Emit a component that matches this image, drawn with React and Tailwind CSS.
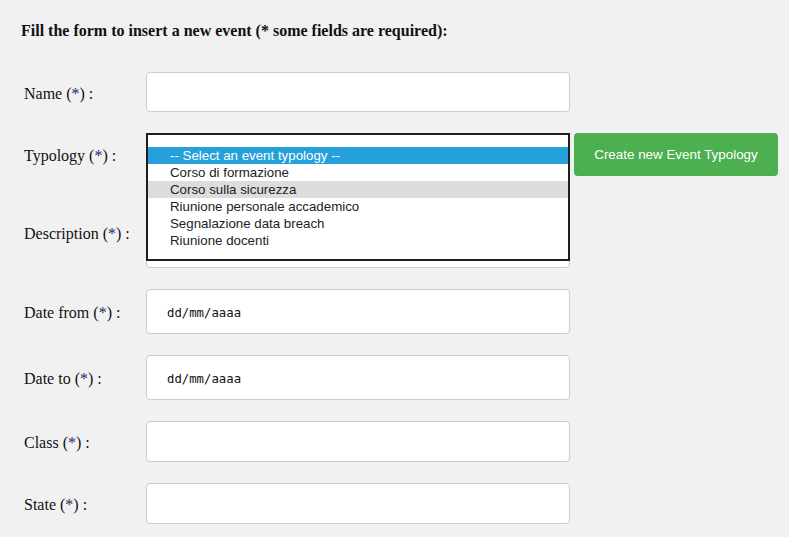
import React from "react";

const typologies = [
  "Corso di formazione",
  "Corso sulla sicurezza",
  "Riunione personale accademico",
  "Segnalazione data breach",
  "Riunione docenti",
];

function Label({ text }) {
  return (
    <label className="w-[122px] shrink-0 pt-[3px] text-[16px] text-[#111]">
      {text} (<span className="text-[#142f6b]">*</span>) :
    </label>
  );
}

function Field({ label, h = "h-[41px]", children }) {
  return (
    <div className="flex items-center">
      <Label text={label} />
      <div className={`w-[424px] ${h} bg-white border border-[#cccccc] rounded-[4px] flex items-center pl-[20px]`}>
        {children}
      </div>
    </div>
  );
}

export default function App() {
  return (
    <div className="min-h-[537px] bg-[#f1f1f1] font-['Liberation_Serif',serif] pt-[19px]">
      <h2 className="pl-[21px] text-[16px] leading-[24px] font-bold text-[#111]">
        Fill the form to insert a new event (* some fields are required):
      </h2>

      <form className="pl-[24px] mt-[29px] flex flex-col gap-[21px]">
        <Field label="Name" h="h-[40px]" />

        <div className="flex items-center">
          <Label text="Typology" />
          <div className="relative w-[424px] h-[43px]">
            <div className="absolute left-0 top-0 w-[424px] h-[128px] z-10 bg-white border-2 border-[#1e1e1e] pt-[12px] font-['Liberation_Sans',Arial,sans-serif] text-[13.3px] text-[#222]">
              <div className="h-[17px] leading-[17px] pl-[22px] bg-[#26a0da] text-white">
                -- Select an event typology --
              </div>
              {typologies.map((t, i) => (
                <div
                  key={t}
                  className={`h-[17px] leading-[17px] pl-[22px] ${i === 1 ? "bg-[#dddddd]" : ""}`}
                >
                  {t}
                </div>
              ))}
            </div>
          </div>
          <button
            type="button"
            className="ml-[4px] w-[204px] h-[43px] pt-[2px] bg-[#4caf50] rounded-[4px] text-white text-[13.4px] font-['Liberation_Sans',Arial,sans-serif]"
          >
            Create new Event Typology
          </button>
        </div>

        <Field label="Description" h="h-[71px]" />

        <Field label="Date from" h="h-[45px]">
          <span className="pt-[3px] font-['DejaVu_Sans_Mono',monospace] text-[12.3px] text-[#111]">dd/mm/aaaa</span>
        </Field>

        <Field label="Date to" h="h-[45px]">
          <span className="pt-[3px] font-['DejaVu_Sans_Mono',monospace] text-[12.3px] text-[#111]">dd/mm/aaaa</span>
        </Field>

        <Field label="Class" />
        <Field label="State" />
      </form>
    </div>
  );
}
